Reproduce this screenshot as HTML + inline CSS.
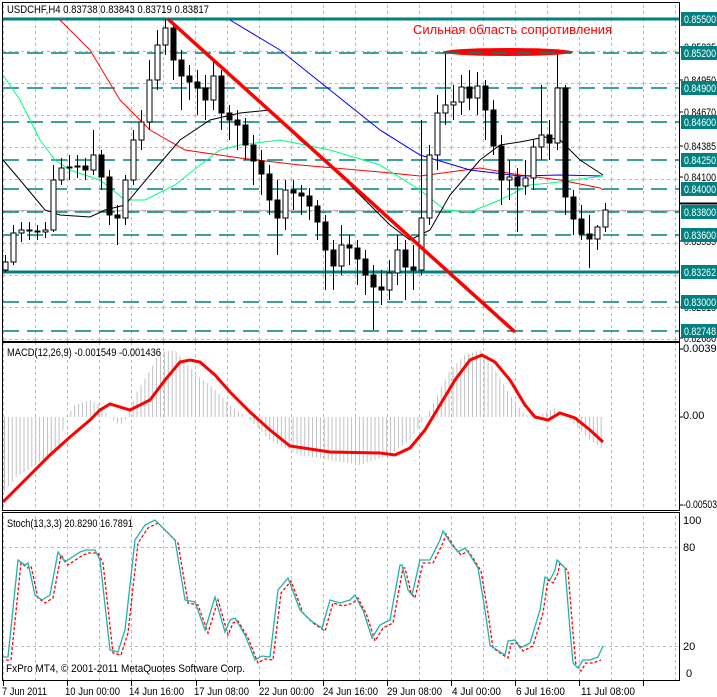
<!DOCTYPE html>
<html><head><meta charset="utf-8"><style>
html,body{margin:0;padding:0;background:#fff;width:717px;height:697px;overflow:hidden}
svg{display:block}
text{font-family:"Liberation Sans",sans-serif;font-size:11px}
.a{font-size:10.5px}
</style></head><body>
<svg width="717" height="697" xmlns="http://www.w3.org/2000/svg">
<defs>
<pattern id="gm" patternUnits="userSpaceOnUse" x="3" y="19" width="32" height="32">
<line x1="0.5" y1="0" x2="0.5" y2="32" stroke="#bbb" stroke-dasharray="3,3"/>
<line x1="0" y1="0.5" x2="32" y2="0.5" stroke="#bbb" stroke-dasharray="3,3"/>
</pattern>
<pattern id="gv" patternUnits="userSpaceOnUse" x="3" y="0" width="32" height="6">
<line x1="0.5" y1="0" x2="0.5" y2="3" stroke="#bbb"/>
</pattern>
<pattern id="hb" patternUnits="userSpaceOnUse" x="4" y="0" width="3.9" height="10">
<rect x="0" y="0" width="1" height="10" fill="#c0c0c0"/>
</pattern>
</defs>
<rect x="3" y="3" width="676" height="338" fill="url(#gm)"/>
<rect x="3" y="343" width="676" height="167" fill="url(#gv)"/>
<rect x="3" y="513" width="676" height="167" fill="url(#gv)"/>
<line x1="3" y1="547.5" x2="679" y2="547.5" stroke="#bbb" stroke-dasharray="3,3"/>
<line x1="3" y1="646.5" x2="679" y2="646.5" stroke="#bbb" stroke-dasharray="3,3"/>

<g stroke="#008080">
<line x1="3" y1="19" x2="679" y2="19" stroke-width="3"/>
<line x1="3" y1="272" x2="679" y2="272" stroke-width="3"/>
<g stroke-width="1.5" stroke-dasharray="16,8">
<line x1="3" y1="53" x2="679" y2="53"/><line x1="3" y1="88" x2="679" y2="88"/>
<line x1="3" y1="122" x2="679" y2="122"/><line x1="3" y1="160" x2="679" y2="160"/>
<line x1="3" y1="189" x2="679" y2="189"/><line x1="3" y1="212" x2="679" y2="212"/>
<line x1="3" y1="235" x2="679" y2="235"/><line x1="3" y1="302" x2="679" y2="302"/>
<line x1="3" y1="331" x2="679" y2="331"/>
</g></g>
<line x1="3" y1="210.5" x2="679" y2="210.5" stroke="#bbb"/>

<g fill="none" stroke-width="1">
<polyline stroke="#f00" points="60,20 90,50 120,100 150,130 185,150 240,158 300,165 380,172 420,176 480,168 520,175 560,180 600,188 603,190"/>
<polyline stroke="#00f" points="230,20 280,50 330,90 380,130 420,155 470,170 520,176 560,175 603,176"/>
<polyline stroke="#00ff80" points="3,75 20,100 40,140 55,160 70,170 100,180 125,200 145,200 175,185 200,165 220,150 240,145 280,140 330,150 380,165 420,190 445,210 470,212 500,200 530,185 560,182 603,176"/>
<polyline stroke="#000" points="3,160 20,180 45,210 60,215 90,217 105,210 125,205 150,175 180,140 210,120 240,113 270,110 300,140 330,165 360,195 390,225 410,240 430,230 450,195 480,160 500,145 520,142 545,137 560,140 580,160 603,175"/>
</g>

<path stroke="#000" stroke-width="1" fill="none" d="M5.5 255V272M13.5 225V265M21.5 222V242M29.5 222V240M37.5 225V240M45.5 222V238M53.5 165V232M61.5 158V185M69.5 155V180M77.5 155V178M85.5 158V180M93.5 130V175M101.5 150V190M109.5 170V225M117.5 205V245M125.5 175V225M133.5 130V185M141.5 110V150M149.5 60V130M157.5 30V90M165.5 19V55M173.5 22V80M181.5 50V110M189.5 65V100M197.5 70V115M205.5 75V120M213.5 62V110M221.5 70V130M229.5 105V140M237.5 110V150M245.5 118V160M253.5 135V185M261.5 150V195M269.5 165V215M277.5 180V255M285.5 180V230M293.5 180V210M301.5 185V215M309.5 188V220M317.5 200V240M325.5 215V290M333.5 240V290M341.5 225V275M349.5 235V265M357.5 240V285M365.5 250V295M373.5 265V330M381.5 270V305M389.5 260V300M397.5 235V285M405.5 240V300M413.5 245V290M421.5 120V275M429.5 145V225M437.5 95V170M445.5 52V125M453.5 85V120M461.5 75V115M469.5 70V110M477.5 72V115M485.5 80V140M493.5 100V155M501.5 135V205M509.5 160V200M517.5 168V232M525.5 160V195M533.5 140V190M541.5 85V160M549.5 120V160M557.5 52V150M565.5 85V215M573.5 190V235M581.5 205V240M589.5 215V268M597.5 225V250M605.5 203V232"/>
<path fill="#fff" stroke="#000" d="M3 262h5v8h-5zM11 233h5v29h-5zM19 230h5v3h-5zM43 230h5v2h-5zM51 180h5v50h-5zM59 168h5v12h-5zM67 167h5v1h-5zM75 166h5v1h-5zM91 155h5v15h-5zM123 180h5v38h-5zM131 140h5v40h-5zM139 122h5v18h-5zM147 80h5v42h-5zM155 45h5v35h-5zM163 28h5v17h-5zM211 76h5v24h-5zM283 190h5v28h-5zM339 245h5v21h-5zM387 273h5v17h-5zM395 250h5v23h-5zM419 218h5v52h-5zM427 155h5v63h-5zM435 113h5v42h-5zM443 105h5v8h-5zM451 102h5v3h-5zM459 87h5v15h-5zM475 86h5v12h-5zM507 177h5v3h-5zM523 178h5v8h-5zM531 147h5v31h-5zM539 135h5v12h-5zM555 88h5v55h-5zM595 227h5v12h-5zM603 210h5v17h-5z"/>
<path fill="#000" stroke="#000" d="M27 230h5v1h-5zM35 231h5v1h-5zM83 166h5v4h-5zM99 155h5v22h-5zM107 177h5v38h-5zM115 215h5v3h-5zM171 28h5v32h-5zM179 60h5v16h-5zM187 76h5v6h-5zM195 82h5v6h-5zM203 88h5v12h-5zM219 76h5v37h-5zM227 113h5v7h-5zM235 120h5v5h-5zM243 125h5v20h-5zM251 145h5v16h-5zM259 161h5v13h-5zM267 174h5v26h-5zM275 200h5v18h-5zM291 190h5v3h-5zM299 193h5v3h-5zM307 196h5v10h-5zM315 206h5v16h-5zM323 222h5v28h-5zM331 250h5v16h-5zM347 245h5v3h-5zM355 248h5v11h-5zM363 259h5v16h-5zM371 275h5v12h-5zM379 287h5v3h-5zM403 250h5v17h-5zM411 267h5v3h-5zM467 87h5v11h-5zM483 86h5v24h-5zM491 110h5v36h-5zM499 146h5v34h-5zM515 177h5v9h-5zM547 135h5v8h-5zM563 88h5v109h-5zM571 197h5v22h-5zM579 219h5v15h-5zM587 234h5v5h-5z"/>

<line x1="168" y1="19" x2="515" y2="332" stroke="#f00" stroke-width="3.5"/>
<ellipse cx="508" cy="52" rx="65" ry="4" fill="#f00"/>
<line x1="443" y1="53" x2="572" y2="53" stroke="#008080" stroke-width="1.5" stroke-dasharray="16,8"/>
<text x="413" y="34" fill="#f00" style="font-size:13px">Сильная область сопротивления</text>
<text x="7" y="13" textLength="202" lengthAdjust="spacingAndGlyphs">USDCHF,H4  0.83738 0.83843 0.83719 0.83817</text>

<polygon fill="url(#hb)" points="3,417 3,493 15,478 30,468 50,455 60,445 66,417 75,405 90,400 100,405 110,418 120,425 128,417 135,395 150,370 160,352 175,350 185,362 200,378 210,385 230,405 250,420 270,440 300,455 330,460 360,465 390,455 410,440 430,410 450,370 465,355 480,350 495,370 510,395 525,415 540,415 555,408 570,420 590,440 604,450 604,417"/>
<polyline fill="none" stroke="#f00" stroke-width="3" points="3,502 30,475 50,455 70,437 90,420 100,410 110,404 130,410 150,400 165,380 180,362 190,360 200,362 215,375 230,392 250,412 270,430 290,446 330,452 380,453 395,455 410,448 425,430 440,405 455,380 470,360 482,355 495,362 510,380 525,405 535,417 548,420 560,413 575,418 590,430 603,442"/>
<text x="7" y="356" textLength="154" lengthAdjust="spacingAndGlyphs">MACD(12,26,9) -0.001549 -0.001436</text>

<polyline fill="none" stroke="#f00" stroke-width="1.3" stroke-dasharray="3,2" transform="translate(3,3)" points="3,657 8,657 18,560 25,565 28,563 35,595 42,600 50,595 58,552 65,562 80,552 86,550 95,550 100,560 110,650 118,652 125,630 135,540 145,525 155,520 165,530 175,540 185,600 195,602 205,630 215,597 225,632 230,620 235,618 245,635 255,660 262,656 270,657 278,590 288,578 300,610 310,620 322,628 330,600 340,603 350,600 355,595 360,605 363,610 372,638 380,625 390,620 400,565 402,565 408,590 412,595 420,560 430,560 440,540 443,531 452,545 458,552 465,548 470,555 478,568 485,610 490,645 500,652 505,655 508,641 515,640 520,648 530,643 540,610 545,577 550,580 555,570 557,560 565,568 570,630 573,663 578,668 583,660 590,660 598,657"/>
<polyline fill="none" stroke="#20b2aa" stroke-width="1.3" points="3,657 8,657 18,560 25,565 28,563 35,595 42,600 50,595 58,552 65,562 80,552 86,550 95,550 100,560 110,650 118,652 125,630 135,540 145,525 155,520 165,530 175,540 185,600 195,602 205,630 215,597 225,632 230,620 235,618 245,635 255,660 262,656 270,657 278,590 288,578 300,610 310,620 322,628 330,600 340,603 350,600 355,595 360,605 363,610 372,638 380,625 390,620 400,565 402,565 408,590 412,595 420,560 430,560 440,540 443,531 452,545 458,552 465,548 470,555 478,568 485,610 490,645 500,652 505,655 508,641 515,640 520,648 530,643 540,610 545,577 550,580 555,570 557,560 565,568 570,630 573,663 578,668 583,660 590,660 598,657 603,646"/>
<text x="7" y="527" textLength="126" lengthAdjust="spacingAndGlyphs">Stoch(13,3,3) 20.8290 16.7891</text>
<text x="6" y="672" textLength="239" lengthAdjust="spacingAndGlyphs">FxPro MT4, © 2001-2011 MetaQuotes Software Corp.</text>

<g fill="none" stroke="#000">
<rect x="2.5" y="2.5" width="677" height="339"/>
<rect x="2.5" y="342.5" width="677" height="168"/>
<rect x="2.5" y="512.5" width="677" height="168"/>
</g>

<path stroke="#000" d="M679 47h4M679 80h4M679 112h4M679 146h4M679 177h4M679 241h4M679 307h4M679 338h4M679 349h4M679 417h4M679 505h4"/>
<g class="a">
<text x="684" y="51" textLength="32" lengthAdjust="spacingAndGlyphs">0.85235</text><text x="684" y="84" textLength="32" lengthAdjust="spacingAndGlyphs">0.84950</text>
<text x="684" y="116" textLength="32" lengthAdjust="spacingAndGlyphs">0.84670</text><text x="684" y="150" textLength="32" lengthAdjust="spacingAndGlyphs">0.84385</text>
<text x="684" y="181" textLength="32" lengthAdjust="spacingAndGlyphs">0.84100</text><text x="684" y="245" textLength="32" lengthAdjust="spacingAndGlyphs">0.83535</text>
<text x="684" y="311" textLength="32" lengthAdjust="spacingAndGlyphs">0.82815</text><text x="684" y="342" textLength="32" lengthAdjust="spacingAndGlyphs">0.82680</text>
</g>
<g fill="#008080">
<rect x="681" y="12" width="36" height="14"/><rect x="681" y="46" width="36" height="14"/>
<rect x="681" y="81" width="36" height="14"/><rect x="681" y="115" width="36" height="14"/>
<rect x="681" y="153" width="36" height="14"/><rect x="681" y="182" width="36" height="14"/>
<rect x="681" y="205" width="36" height="14"/><rect x="681" y="228" width="36" height="14"/>
<rect x="681" y="265" width="36" height="14"/><rect x="681" y="295" width="36" height="14"/>
<rect x="681" y="324" width="36" height="14"/>
</g>
<g fill="#fff" class="a">
<text x="684" y="23" textLength="32" lengthAdjust="spacingAndGlyphs">0.85500</text><text x="684" y="57" textLength="32" lengthAdjust="spacingAndGlyphs">0.85200</text>
<text x="684" y="92" textLength="32" lengthAdjust="spacingAndGlyphs">0.84900</text><text x="684" y="126" textLength="32" lengthAdjust="spacingAndGlyphs">0.84600</text>
<text x="684" y="164" textLength="32" lengthAdjust="spacingAndGlyphs">0.84250</text><text x="684" y="193" textLength="32" lengthAdjust="spacingAndGlyphs">0.84000</text>
<text x="684" y="216" textLength="32" lengthAdjust="spacingAndGlyphs">0.83800</text><text x="684" y="239" textLength="32" lengthAdjust="spacingAndGlyphs">0.83600</text>
<text x="684" y="276" textLength="32" lengthAdjust="spacingAndGlyphs">0.83262</text><text x="684" y="306" textLength="32" lengthAdjust="spacingAndGlyphs">0.83000</text>
<text x="684" y="335" textLength="32" lengthAdjust="spacingAndGlyphs">0.82748</text>
</g>
<line x1="679" y1="203.5" x2="717" y2="203.5" stroke="#000" stroke-width="2"/>
<g class="a">
<text x="683" y="352">0.0039</text><text x="683" y="419">0.00</text><text x="683" y="508" textLength="34" lengthAdjust="spacingAndGlyphs">-0.00503</text>
<text x="683" y="524">100</text><text x="683" y="551">80</text><text x="683" y="650">20</text><text x="686" y="677">0</text>
</g>

<path stroke="#000" d="M3.5 681V686M67.5 681V686M131.5 681V686M196.5 681V686M259.5 681V686M323.5 681V686M387.5 681V686M451.5 681V686M515.5 681V686M579.5 681V686M643.5 681V686"/>
<g class="a">
<text x="2" y="695" textLength="45" lengthAdjust="spacingAndGlyphs">7 Jun 2011</text>
<text x="65" y="695" textLength="55" lengthAdjust="spacingAndGlyphs">10 Jun 00:00</text>
<text x="129" y="695" textLength="55" lengthAdjust="spacingAndGlyphs">14 Jun 16:00</text>
<text x="194" y="695" textLength="55" lengthAdjust="spacingAndGlyphs">17 Jun 08:00</text>
<text x="259" y="695" textLength="55" lengthAdjust="spacingAndGlyphs">22 Jun 00:00</text>
<text x="323" y="695" textLength="55" lengthAdjust="spacingAndGlyphs">24 Jun 16:00</text>
<text x="387" y="695" textLength="55" lengthAdjust="spacingAndGlyphs">29 Jun 08:00</text>
<text x="452" y="695" textLength="49" lengthAdjust="spacingAndGlyphs">4 Jul 00:00</text>
<text x="516" y="695" textLength="49" lengthAdjust="spacingAndGlyphs">6 Jul 16:00</text>
<text x="581" y="695" textLength="54" lengthAdjust="spacingAndGlyphs">11 Jul 08:00</text>
</g>
</svg>
</body></html>
